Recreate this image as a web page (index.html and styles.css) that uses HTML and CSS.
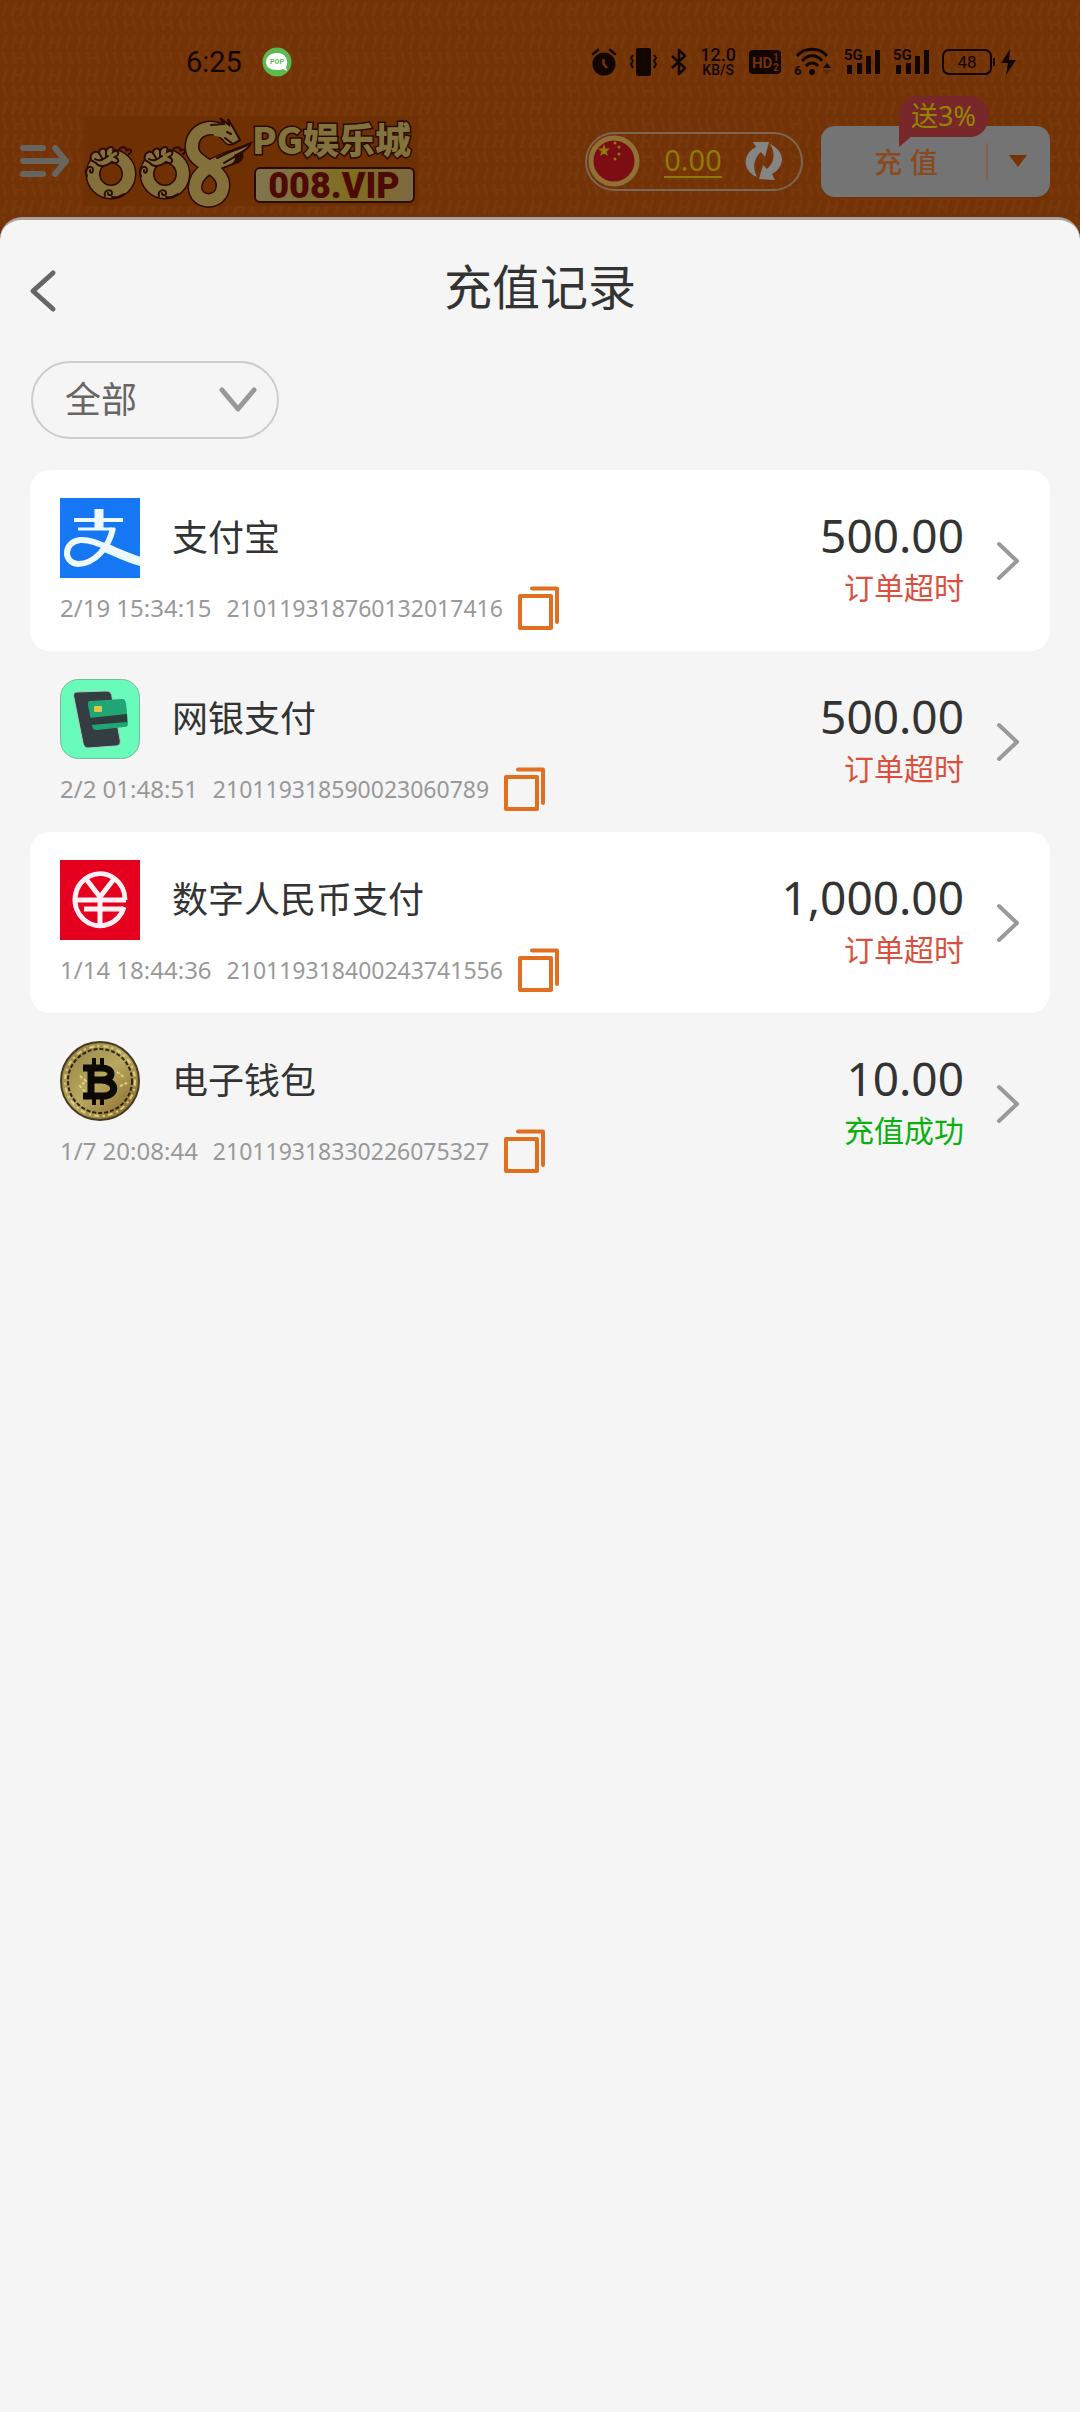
FILE: index.html
```
<!DOCTYPE html>
<html lang="zh-CN">
<head>
  <meta charset="UTF-8" />
  <meta name="viewport" content="width=device-width, initial-scale=1.0"/>
  <title>充值记录</title>
  <link rel="stylesheet" href="styles.css">
</head>
<body>

<!-- shared icons -->
<svg class="sprite" aria-hidden="true">
  <symbol id="icon-copy" viewBox="0 0 41 44">
    <g fill="none" stroke="#e07020" stroke-width="4" stroke-linejoin="round" stroke-linecap="round">
      <rect x="2" y="10" width="31" height="32"/>
      <path d="M14 2.500H39V36"/>
    </g>
  </symbol>
  <symbol id="icon-next" viewBox="0 0 24 40">
    <path d="M3 3L21 20L3 37" fill="none" stroke="#999" stroke-width="4" stroke-linecap="round" stroke-linejoin="round"/>
  </symbol>
  <symbol id="icon-signal" viewBox="0 0 36 28">
    <text x="0" y="12" class="signal-text">5G</text>
    <path d="M3 17h5v9h-5zM13 15h5v11h-5zM22 8h5v18h-5zM31 2h5v24h-5z"/>
  </symbol>
  <symbol id="ring-dragon" viewBox="0 0 54 58">
    <ellipse cx="27" cy="32" rx="18" ry="18" fill="none" stroke="#2c0b02" stroke-width="15"/>
    <ellipse cx="27" cy="32" rx="18" ry="18" fill="none" stroke="#84703a" stroke-width="12"/>
    <path d="M7 18C5 11 12 8 15 11C15 6 21 5 22 9C25 3 31 4 29 10C34 7 37 12 31 15C37 18 34 23 28 20C23 24 15 26 12 21Z" fill="#84703a" stroke="#2c0b02" stroke-width="2"/>
    <path d="M11 17C16 20 20 17 24 14M15 11L18 16M22 9L22 15M34 9C37 3 44 5 42 9C47 5 49 10 45 12M3 34C-1 25 9 22 9 28C9 32 5 31 6 28M21 54C19 48 28 46 28 51C28 54 24 54 24 51M28 55C33 56 37 54 40 52" fill="none" stroke="#2c0b02" stroke-width="2" stroke-linecap="round"/>
  </symbol>
</svg>

<div class="app">

  <div class="status-bar">
    <span class="clock">6:25</span>
    <svg class="pop" width="30" height="30" viewBox="0 0 30 30">
      <circle cx="15" cy="15" r="14.500" fill="#5cba50"/>
      <path d="M15 6C8 6 4 10 4 15S8 23 15 23C18 23 20 22.500 21 22L25 24L24 20C27 14 24 6 15 6Z" fill="#fff"/>
      <text x="15" y="17" class="pop-text">POP</text>
    </svg>

    <div class="status-icons">
      <svg width="24" height="28" viewBox="0 0 24 28">
        <circle cx="12" cy="16" r="11.500"/>
        <path d="M1 6L6 2M23 6L18 2" stroke="#120700" stroke-width="2.500" stroke-linecap="round"/>
        <path d="M11.500 11V16L15 20" fill="none" stroke="#733306" stroke-width="2.500"/>
      </svg>
      <svg width="29" height="28" viewBox="0 0 29 28">
        <rect x="7" y="0" width="15" height="28" rx="2"/>
        <path d="M4 7L2 10L4 13L2 16L4 20M25 7L27 10L25 13L27 16L25 20" fill="none" stroke="#120700" stroke-width="2"/>
      </svg>
      <svg width="16" height="28" viewBox="0 0 16 28">
        <path d="M1 8L14 20L8 26V2L14 8L1 20" fill="none" stroke="#120700" stroke-width="2.500" stroke-linejoin="round"/>
      </svg>
      <span class="speed"><b>12.0</b><small>KB/S</small></span>
      <svg width="32" height="24" viewBox="0 0 32 24">
        <rect width="32" height="24" rx="4"/>
        <text x="3" y="18" class="hd-text">HD</text>
        <text x="24" y="11" class="hd-num">1</text>
        <text x="24" y="21" class="hd-num">2</text>
      </svg>
      <svg width="37" height="28" viewBox="0 0 37 28">
        <g fill="none" stroke="#120700" stroke-width="3">
          <path d="M3 8C10 -1 26 -1 33 8"/>
          <path d="M8 13C14 6 23 6 28 13"/>
          <path d="M12 18C15 14 21 14 24 18"/>
        </g>
        <circle cx="18" cy="24" r="3"/>
        <text x="0" y="27" class="wifi-text">6</text>
        <path d="M29 20L33 15L37 20Z"/>
        <path d="M29 22L33 27L37 22Z" fill="#5b2704"/>
      </svg>
      <svg width="36" height="28"><use href="#icon-signal"/></svg>
      <svg width="36" height="28"><use href="#icon-signal"/></svg>
      <svg width="74" height="28" viewBox="0 0 74 28">
        <rect x="1" y="2" width="48" height="24" rx="6" fill="none" stroke="#120700" stroke-width="2"/>
        <path d="M51 10h2v8h-2z"/>
        <text x="25" y="20" class="battery-text">48</text>
        <path d="M68 1L59 15H66L64 27L74 12H67Z"/>
      </svg>
    </div>
  </div>

  <header class="topbar">
    <button class="menu-btn" aria-label="菜单">
      <svg width="50" height="32" viewBox="0 0 50 32">
        <path d="M3 3H23M3 16H46M3 29H23M35 3L46 16L35 29" fill="none" stroke="#686460" stroke-width="6" stroke-linecap="round" stroke-linejoin="round"/>
      </svg>
    </button>

    <a href="#" class="brand" aria-label="008 PG娱乐城">
      <svg width="334" height="90" viewBox="0 0 334 90">
        <defs>
          <linearGradient id="gold">
            <stop offset="0" stop-color="#807452"/>
            <stop offset=".6" stop-color="#806d1e"/>
            <stop offset="1" stop-color="#7c6a42"/>
          </linearGradient>
        </defs>
        <rect width="334" height="90" fill="#6f3003"/>
        <use href="#ring-dragon" x="0" y="26" width="54" height="58"/>
        <use href="#ring-dragon" x="54" y="26" width="54" height="58"/>
        <!-- long dragon -->
        <g fill="none" stroke-linecap="round">
          <path d="M152 40C136 46 112 53 111 71C111 89 138 89 139 70C140 51 109 49 108 32C107 12 132 4 146 22" stroke="#2c0b02" stroke-width="15"/>
          <path d="M163 31L138 47L140 37Z" fill="#84703a" stroke="#2c0b02" stroke-width="2"/>
          <path d="M145 42C134 47 112 53 111 71C111 89 138 89 139 70C140 51 109 49 108 32C107 12 132 4 146 22" stroke="#84703a" stroke-width="12"/>
          <path d="M127 9L140 8L136 2L145 9L144 3L150 13L156 24L149 28L141 22L130 20Z" fill="#84703a"/>
          <path d="M127 9L140 8L136 2L145 9L144 3L150 13L156 24L149 28L141 22M143 16L147 18M133 42L152 33L167 27C163 36 149 41 140 47" stroke="#2c0b02" stroke-width="2"/>
          <path d="M137 43L152 35L164 30C158 37 145 40 139 44Z" fill="#84703a"/>
        </g>
        <text x="168" y="38" class="brand-name">PG娱乐城</text>
        <rect x="171" y="52" width="159" height="34" rx="5" fill="url(#gold)" stroke="#2c0b02" stroke-width="2"/>
        <text x="250" y="82" class="brand-url">008.VIP</text>
      </svg>
    </a>

    <div class="wallet">
      <svg width="54" height="54" viewBox="0 0 54 54">
        <circle cx="27" cy="27" r="23" fill="#7c0d13" stroke="#917035" stroke-width="5"/>
        <path d="M17 10L18.500 14.500H23L19.500 17.500L21 22L17 19.500L13 22L14.500 17.500L11 14.500H15.500Z" fill="#917a08"/>
        <g fill="#917a08">
          <circle cx="28" cy="9" r="1.500"/><circle cx="32" cy="13" r="1.500"/>
          <circle cx="32" cy="20" r="1.500"/><circle cx="28" cy="25" r="1.500"/>
        </g>
      </svg>
      <a href="#" class="balance">0.00</a>
      <button class="refresh-btn" aria-label="刷新">
        <svg width="38" height="40" viewBox="0 0 38 40" fill="#858585">
          <path d="M8 1L24 1L20 16L16 11C9 17 7 26 12 36C-3 30 -3 13 11 6Z"/>
          <path d="M30 39L14 38L18 24L22 28C29 22 31 13 25 3C40 10 41 25 27 33Z"/>
        </svg>
      </button>
    </div>

    <div class="deposit">
      <button class="deposit-btn">充 值</button>
      <button class="deposit-more" aria-label="更多">
        <svg width="18" height="12" viewBox="0 0 18 12"><path d="M0 0H18L9 12Z" fill="#743406"/></svg>
      </button>
      <span class="bonus">送3%</span>
    </div>
  </header>

  <main class="sheet">
    <div class="sheet-head">
      <button class="back-btn" aria-label="返回">
        <svg width="26" height="42" viewBox="0 0 26 42">
          <path d="M23 3L3 21L23 39" fill="none" stroke="#666" stroke-width="5" stroke-linecap="round" stroke-linejoin="round"/>
        </svg>
      </button>
      <h1>充值记录</h1>
    </div>

    <select class="filter" aria-label="支付方式">
      <option>全部</option>
      <option>支付宝</option>
      <option>网银支付</option>
      <option>数字人民币支付</option>
      <option>电子钱包</option>
    </select>

    <ul class="records">
      <li class="record">
        <div class="record-main">
          <div class="record-title">
            <svg class="record-logo" viewBox="0 0 80 80">
              <rect width="80" height="80" fill="#1677f5"/>
              <g fill="none" stroke="#eef9ff">
                <path d="M39 11V31" stroke-width="9"/>
                <path d="M14 22H63" stroke-width="4"/>
                <path d="M18 31H55" stroke-width="3"/>
                <path d="M53 30C49 50 34 66 18 66C3 65 3 44 20 42C36 41 52 54 80 62" stroke-width="6"/>
                <path d="M44 49C56 54 68 60 82 64" stroke-width="9"/>
              </g>
            </svg>
            <h2>支付宝</h2>
          </div>
          <div class="record-meta">
            <time>2/19 15:34:15</time>
            <span class="order-no">210119318760132017416</span>
            <button class="copy-btn" aria-label="复制"><svg width="41" height="44"><use href="#icon-copy"/></svg></button>
          </div>
        </div>
        <div class="record-side">
          <div class="amount">500.00</div>
          <div class="state">订单超时</div>
        </div>
        <a href="#" class="next" aria-label="详情"><svg width="24" height="40"><use href="#icon-next"/></svg></a>
      </li>

      <li class="record">
        <div class="record-main">
          <div class="record-title">
            <svg class="record-logo" viewBox="0 0 80 80">
              <rect x=".5" y=".5" width="79" height="79" rx="18" fill="#68fbb9" stroke="#7bb79b"/>
              <path d="M17 13L46 12C50 12 52 15 52 18L60 60C61 65 59 67 55 67L28 69C25 69 24 67 23 64L14 19C13 15 14 13 17 13Z" fill="#343e42" stroke="#a9cfc0" stroke-width="1"/>
              <path d="M30 22L62 20C65 20 65 22 66 24L68 44C68 47 67 48 64 48L37 51C34 51 33 50 32 47L28 26C28 23 28 22 30 22Z" fill="#20a574"/>
              <path d="M29 39L67 35V43L31 46Z" fill="#303b3b"/>
              <rect x="34" y="27" width="8" height="6" rx="1" fill="#ddc44b"/>
            </svg>
            <h2>网银支付</h2>
          </div>
          <div class="record-meta">
            <time>2/2 01:48:51</time>
            <span class="order-no">210119318590023060789</span>
            <button class="copy-btn" aria-label="复制"><svg width="41" height="44"><use href="#icon-copy"/></svg></button>
          </div>
        </div>
        <div class="record-side">
          <div class="amount">500.00</div>
          <div class="state">订单超时</div>
        </div>
        <a href="#" class="next" aria-label="详情"><svg width="24" height="40"><use href="#icon-next"/></svg></a>
      </li>

      <li class="record">
        <div class="record-main">
          <div class="record-title">
            <svg class="record-logo" viewBox="0 0 80 80">
              <rect width="80" height="80" fill="#e60020"/>
              <g fill="none" stroke="#fff0f3" stroke-width="5">
                <path d="M65 40A25 26 0 1 0 64 47"/>
                <path d="M26 19L40 37L54 19M40 37V66M16 40H66M24 49H63"/>
              </g>
            </svg>
            <h2>数字人民币支付</h2>
          </div>
          <div class="record-meta">
            <time>1/14 18:44:36</time>
            <span class="order-no">210119318400243741556</span>
            <button class="copy-btn" aria-label="复制"><svg width="41" height="44"><use href="#icon-copy"/></svg></button>
          </div>
        </div>
        <div class="record-side">
          <div class="amount">1,000.00</div>
          <div class="state">订单超时</div>
        </div>
        <a href="#" class="next" aria-label="详情"><svg width="24" height="40"><use href="#icon-next"/></svg></a>
      </li>

      <li class="record">
        <div class="record-main">
          <div class="record-title">
            <svg class="record-logo" viewBox="0 0 80 80">
              <defs>
                <linearGradient id="coin" x1="0" y1="0" x2="1" y2="1">
                  <stop offset="0" stop-color="#8f7c40"/>
                  <stop offset=".5" stop-color="#b9a862"/>
                  <stop offset="1" stop-color="#80601f"/>
                </linearGradient>
              </defs>
              <circle cx="40" cy="40" r="39" fill="url(#coin)" stroke="#453c20" stroke-width="2"/>
              <circle cx="40" cy="40" r="35" fill="none" stroke="#e0cc7c" stroke-width="2" stroke-dasharray="5 3 2 4"/>
              <circle cx="40" cy="40" r="32" fill="none" stroke="#2b2514" stroke-width="2" stroke-dasharray="4 2"/>
              <path d="M20 35L26 40L20 45L25 51M57 31L65 37M60 45L67 42" fill="none" stroke="#e5d37a" stroke-width="2" stroke-dasharray="3 2"/>
              <g fill="none" stroke="#0c0a04">
                <path d="M23 27H42C54 27 54 39 42 39H32M42 39C58 40 57 55 43 55H23M31 27V55" stroke-width="7"/>
                <path d="M34 17V27M42 17V27M34 55V64M42 55V64" stroke-width="4"/>
              </g>
            </svg>
            <h2>电子钱包</h2>
          </div>
          <div class="record-meta">
            <time>1/7 20:08:44</time>
            <span class="order-no">210119318330226075327</span>
            <button class="copy-btn" aria-label="复制"><svg width="41" height="44"><use href="#icon-copy"/></svg></button>
          </div>
        </div>
        <div class="record-side">
          <div class="amount">10.00</div>
          <div class="state success">充值成功</div>
        </div>
        <a href="#" class="next" aria-label="详情"><svg width="24" height="40"><use href="#icon-next"/></svg></a>
      </li>
    </ul>
  </main>

</div>

</body>
</html>
```
FILE: styles.css
```
* {
  box-sizing: border-box;
}

body {
  margin: 0;
  font-family: 'Noto Sans', 'Noto Sans CJK SC', sans-serif;
  background: #733306;
  color: #333;
}

button {
  padding: 0;
  border: none;
  background: none;
  font-family: inherit;
  cursor: pointer;
}

svg {
  display: block;
  flex-shrink: 0;
  overflow: visible;
}

.sprite {
  display: none;
}

.app {
  display: flex;
  flex-direction: column;
  min-height: 100vh;
  background: #733306 url("data:image/svg+xml,%3Csvg xmlns='http://www.w3.org/2000/svg' width='37' height='33'%3E%3Cg fill='none' stroke='%2377380b' stroke-width='3'%3E%3Cpath d='M7 2L3 16M16 2L12 16M14 9H22M24 2L20 16M33 2L29 16M3 19L6 31M13 19L16 31M15 25H22M22 19L25 31M32 19L35 31'/%3E%3C/g%3E%3C/svg%3E");
}

/* status bar */
.status-bar {
  display: flex;
  align-items: center;
  padding: 46px 64px 0 186px;
  height: 78px;
  color: #120700;
  fill: #120700;
}

.clock {
  font-family: Roboto, sans-serif;
  font-size: 29px;
}

.pop {
  margin-left: 20px;
}

.pop-text {
  font: bold 7px Roboto, sans-serif;
  fill: #5cba50;
  text-anchor: middle;
}

.status-icons {
  display: flex;
  align-items: center;
  gap: 13px;
  margin-left: auto;
}

.speed {
  display: flex;
  flex-direction: column;
  align-items: center;
  font-family: Roboto, sans-serif;
}

.speed b {
  font-size: 18px;
  font-weight: 500;
  line-height: 16px;
}

.speed small {
  font-size: 14px;
  font-weight: 500;
  line-height: 14px;
}

.hd-text {
  font: bold 15px Roboto, sans-serif;
  fill: #733306;
}

.hd-num {
  font: bold 10px Roboto, sans-serif;
  fill: #733306;
}

.wifi-text {
  font: bold 13px Roboto, sans-serif;
}

.signal-text {
  font: bold 15px Roboto, sans-serif;
}

.battery-text {
  font: 17px Roboto, sans-serif;
  text-anchor: middle;
}

/* header */
.topbar {
  display: flex;
  align-items: center;
  height: 139px;
  padding: 27px 30px 0 20px;
}

.brand {
  margin-left: 14px;
}

.brand-name {
  font: 900 36px 'Noto Sans CJK SC', sans-serif;
  fill: #82723c;
  stroke: #2c0b02;
  stroke-width: 3px;
  paint-order: stroke;
}

.brand-url {
  font: 900 36px Roboto, sans-serif;
  fill: #4e0a04;
  text-anchor: middle;
}

.wallet {
  display: flex;
  align-items: center;
  width: 218px;
  height: 59px;
  margin-left: auto;
  padding: 0 18px 0 0;
  border: 2px solid #7c6656;
  border-radius: 30px;
}

.balance {
  margin: 0 auto;
  border-bottom: 2px solid #8f7a06;
  font-size: 29px;
  line-height: 32px;
  color: #8f7a06;
  text-decoration: none;
}

.deposit {
  position: relative;
  display: flex;
  align-items: center;
  width: 229px;
  height: 71px;
  margin-left: 18px;
  border-radius: 14px;
  background: #747474;
}

.deposit-btn {
  flex: 1;
  padding-left: 5px;
  font-size: 28px;
  font-weight: 500;
  color: #8a4a20;
}

.deposit-more {
  display: flex;
  justify-content: center;
  align-items: center;
  width: 64px;
  height: 37px;
  padding-right: 3px;
  border-left: 2px solid #806450;
}

.bonus {
  position: absolute;
  top: -30px;
  left: 78px;
  width: 89px;
  height: 41px;
  border-radius: 18px 18px 18px 0;
  background: #78282a;
  font-size: 27px;
  line-height: 40px;
  text-align: center;
  color: #958600;
}

.bonus::after {
  content: '';
  position: absolute;
  top: 40px;
  left: 0;
  border-top: 11px solid #78282a;
  border-right: 13px solid transparent;
}

/* sheet */
.sheet {
  flex: 1;
  padding: 0 30px;
  border-top: 3px solid #aaa29c;
  border-radius: 22px 22px 0 0;
  background: #f5f5f5;
}

.sheet-head {
  display: grid;
  grid-template-columns: 60px 1fr 60px;
  align-items: center;
  height: 141px;
}

.sheet-head h1 {
  margin: 0;
  padding-bottom: 8px;
  font-size: 48px;
  font-weight: 400;
  line-height: 72px;
  text-align: center;
}

.filter {
  display: block;
  width: 248px;
  height: 78px;
  margin: 0 0 31px 1px;
  padding: 0 60px 2px 32px;
  border: 2px solid #ccc;
  border-radius: 39px;
  appearance: none;
  background: url("data:image/svg+xml,%3Csvg xmlns='http://www.w3.org/2000/svg' width='38' height='28'%3E%3Cpath d='M3 4L19 23L35 4' fill='none' stroke='%23999' stroke-width='5' stroke-linecap='round' stroke-linejoin='round'/%3E%3C/svg%3E") no-repeat right 20px center;
  font-family: inherit;
  font-size: 36px;
  color: #666;
}

.records {
  margin: 0;
  padding: 0;
  list-style: none;
}

.record {
  display: flex;
  align-items: center;
  padding: 20px 30px;
  border-radius: 20px;
}

.record:nth-child(odd) {
  background: #fff;
}

.record-main {
  flex: 1;
  padding-top: 8px;
}

.record-title {
  display: flex;
  align-items: center;
  gap: 32px;
  height: 80px;
}

.record-logo {
  width: 80px;
  height: 80px;
  overflow: hidden;
}

.record-title h2 {
  margin: 0;
  font-size: 36px;
  font-weight: 400;
  line-height: 48px;
}

.record-meta {
  display: flex;
  align-items: center;
  gap: 15px;
  margin: 8px 0 1px;
  font-size: 24px;
  line-height: 32px;
  color: #999;
}

.order-no {
  font-size: 23px;
}

.record-side {
  padding-bottom: 2px;
  text-align: right;
}

.amount {
  font-size: 46px;
  line-height: 56px;
}

.state {
  font-size: 30px;
  line-height: 50px;
  color: #d9503f;
}

.state.success {
  color: #0ab00f;
}

.next {
  margin-left: 32px;
}
```
